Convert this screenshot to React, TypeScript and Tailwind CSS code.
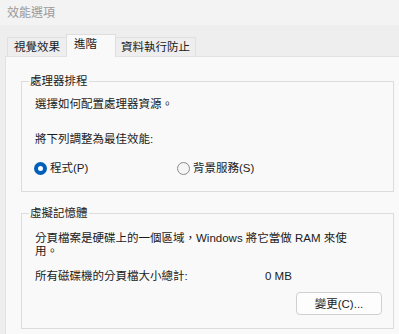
const Radio = ({ checked }: { checked?: boolean }) =>
  checked ? (
    <span className="flex h-[13px] w-[13px] shrink-0 items-center justify-center rounded-full bg-[#005fb8]">
      <span className="h-[5px] w-[5px] rounded-full bg-white" />
    </span>
  ) : (
    <span className="h-[13px] w-[13px] shrink-0 rounded-full border border-[#8a8a8a] bg-[#f5f5f5]" />
  );

const Group = ({ title, className, children }: { title: string; className: string; children: React.ReactNode }) => (
  <div className={`relative border border-[#dcdcdc] ${className}`}>
    <span className="absolute -top-[9px] left-[7px] bg-[#f9f9f9] px-[1px] leading-[16px]">{title}</span>
    {children}
  </div>
);

export default function App() {
  return (
    <div className="h-[334px] w-[399px] overflow-hidden bg-[#eeeeee] font-['Liberation_Sans','Noto_Sans_CJK_TC',sans-serif] text-[11.5px] text-[#1b1b1b]">
      <div className="flex h-[25px] items-center bg-[#f3f3f3] px-[7px] text-[12px] text-[#9a9a9a]">效能選項</div>

      <div className="flex h-[31px] items-end pl-[7px]">
        <div className="flex h-[19px] w-[59px] items-start justify-center border-l border-t border-[#e0e0e0] pt-[1px] leading-[16px]">
          視覺效果
        </div>
        <div className="relative z-10 -mb-px h-[23px] w-[50px] border border-b-0 border-[#dedede] bg-[#f9f9f9] pl-[7px] pt-[1px] leading-[16px]">
          進階
        </div>
        <div className="flex h-[19px] w-[80px] items-start justify-center border-r border-t border-[#e0e0e0] pt-[1px] leading-[16px]">
          資料執行防止
        </div>
      </div>

      <div className="ml-[5px] h-[278px] border-l border-t border-[#e2e2e2] bg-[#f9f9f9] pl-[15px] pr-[5px]">
        <Group title="處理器排程" className="mt-[24px] h-[111px]">
          <div className="pl-[13px] pt-[14px] leading-[16px]">
            <div>選擇如何配置處理器資源。</div>
            <div className="mt-[19px]">將下列調整為最佳效能:</div>
            <div className="mt-[13px] flex h-[16px] items-center -ml-[1px]">
              <label className="flex w-[143px] items-center gap-[3px]">
                <Radio checked />
                程式(P)
              </label>
              <label className="flex items-center gap-[3px]">
                <Radio />
                背景服務(S)
              </label>
            </div>
          </div>
        </Group>

        <Group title="虛擬記憶體" className="mt-[21px] h-[116px]">
          <div className="pl-[13px] pt-[18px] leading-[13px]">
            <p>
              分頁檔案是硬碟上的一個區域，Windows 將它當做 RAM 來使
              <br />
              用。
            </p>
            <div className="mt-[12px] flex">
              <span className="w-[230px]">所有磁碟機的分頁檔大小總計:</span>
              <span>0 MB</span>
            </div>
            <div className="mt-[9px] flex justify-end pr-[11px]">
              <button className="h-[23px] w-[86px] rounded-[4px] border border-[#d0d0d0] bg-[#fdfdfd] leading-[16px] text-[#1b1b1b]">
                變更(C)...
              </button>
            </div>
          </div>
        </Group>
      </div>
    </div>
  );
}
